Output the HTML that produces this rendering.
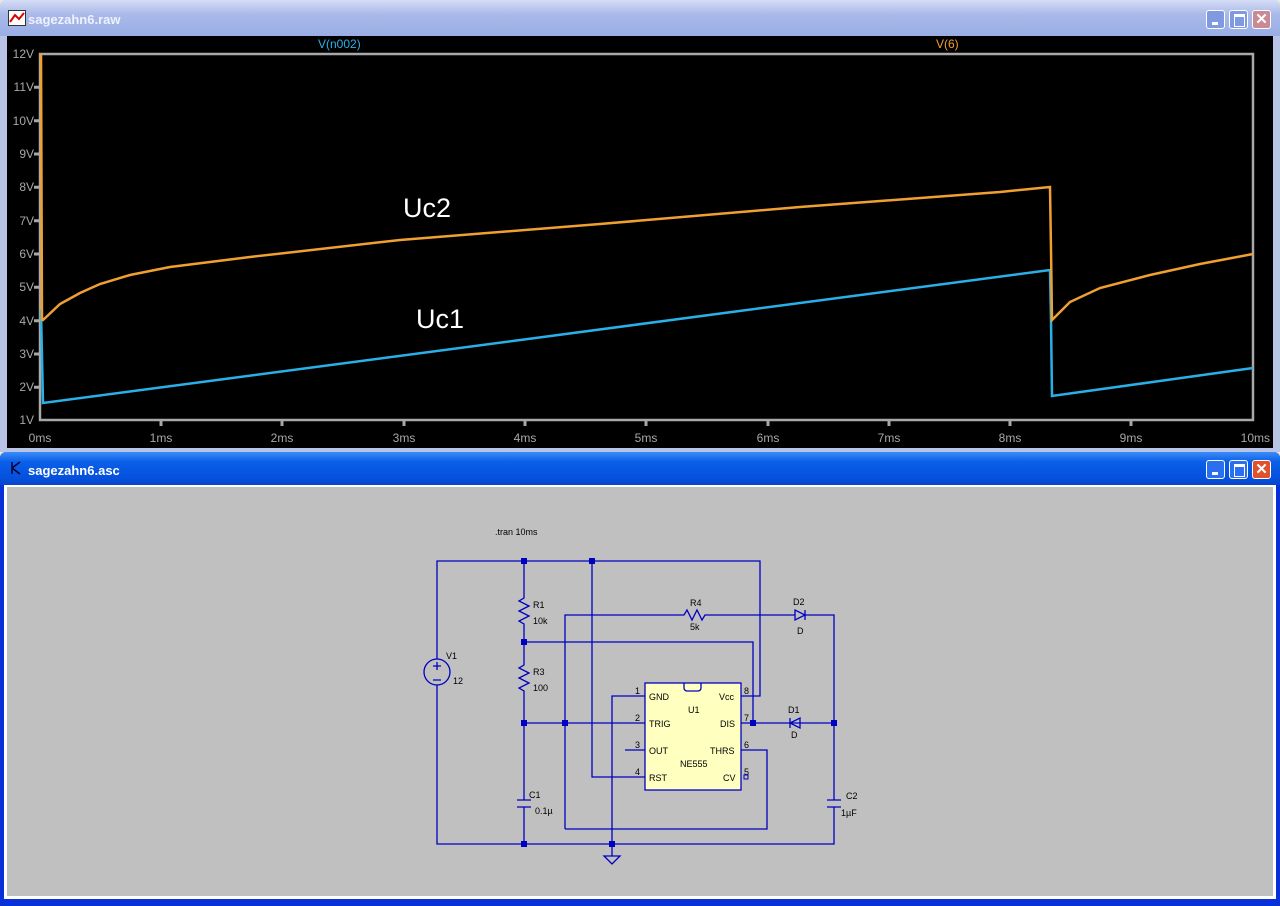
<!DOCTYPE html>
<html><head><meta charset="utf-8"><style>
body{margin:0;width:1280px;height:906px;background:#ece9d8;overflow:hidden;font-family:"Liberation Sans",sans-serif}
.w{position:absolute;left:0;width:1280px}
.tb{position:absolute;left:0;width:1280px;color:#fff;font:bold 13px "Liberation Sans",sans-serif}
.btn{position:absolute;width:19px;height:19px;border:1px solid #fff;border-radius:3px;box-sizing:border-box}
</style></head><body>
<div class="w" style="top:0;height:452px;background:#b7c4e6;border-radius:6px 6px 0 0"></div>
<div class="tb" style="top:0;height:36px;background:linear-gradient(#d4dcf5,#a9b9e8 40%,#9aaee5);border-radius:6px 6px 0 0">
 <svg style="position:absolute;left:8px;top:10px" width="18" height="16"><rect x="0.5" y="0.5" width="17" height="15" fill="#fff" stroke="#333"/><path d="M2 12 L7 5 L11 9 L16 3" stroke="#d00" stroke-width="2" fill="none"/></svg>
 <span style="position:absolute;left:28px;top:12px;color:#eef2ff">sagezahn6.raw</span>
 <div class="btn" style="left:1206px;top:10px;background:#7f9ae0"><div style="position:absolute;left:5px;top:11px;width:6px;height:3px;background:#fff"></div></div>
 <div class="btn" style="left:1229px;top:10px;background:#7f9ae0"><div style="position:absolute;left:4px;top:3px;width:9px;height:9px;border:1px solid #fff;border-top-width:3px"></div></div>
 <div class="btn" style="left:1252px;top:10px;background:#c98a93;color:#fff;font-size:15px;text-align:center;line-height:17px">✕</div>
</div>
<div style="position:absolute;left:7px;top:36px;width:1266px;height:412px;background:#000"></div>
<svg style="position:absolute;left:0;top:0" width="1280" height="452" font-family="Liberation Sans" font-size="12">
 <rect x="40" y="54" width="1213" height="366" fill="none" stroke="#a8a8a8" stroke-width="2.5"/>
 <g fill="#a8a8a8" text-anchor="end">
  <text x="34" y="58">12V</text><text x="34" y="91">11V</text><text x="34" y="125">10V</text><text x="34" y="158">9V</text><text x="34" y="191">8V</text><text x="34" y="225">7V</text><text x="34" y="258">6V</text><text x="34" y="291">5V</text><text x="34" y="325">4V</text><text x="34" y="358">3V</text><text x="34" y="391">2V</text><text x="34" y="424">1V</text>
 </g>
 <g stroke="#a8a8a8" stroke-width="3">
  <path d="M34 87.3h6M34 120.7h6M34 154h6M34 187.3h6M34 220.7h6M34 254h6M34 287.3h6M34 320.7h6M34 354h6M34 387.3h6"/>
  <path d="M161 420v6M282 420v6M404 420v6M525 420v6M646 420v6M768 420v6M889 420v6M1010 420v6M1131 420v6"/>
 </g>
 <g fill="#a8a8a8" text-anchor="middle">
  <text x="40" y="442">0ms</text><text x="161" y="442">1ms</text><text x="282" y="442">2ms</text><text x="404" y="442">3ms</text><text x="525" y="442">4ms</text><text x="646" y="442">5ms</text><text x="768" y="442">6ms</text><text x="889" y="442">7ms</text><text x="1010" y="442">8ms</text><text x="1131" y="442">9ms</text><text x="1270" y="442" text-anchor="end">10ms</text>
 </g>
 <text x="318" y="48" fill="#2ab0e8">V(n002)</text>
 <text x="936" y="48" fill="#f0a030">V(6)</text>
 <path d="M41 320 L41 310 L43 403 L1050 270 L1051 320 L1052 396 L1253 368" fill="none" stroke="#2ab0e8" stroke-width="2.5"/>
 <path d="M41 54 L42 320 L43 320 L60 304 L80 293 L100 284 L130 275 L170 267 L250 257 L400 240 L600 224 L800 207 L1000 192 L1050 187 L1051 250 L1052 320 L1070 302 L1100 288 L1150 275 L1200 264 L1253 254" fill="none" stroke="#f0a030" stroke-width="2.5"/>
 <text x="403" y="217" fill="#fff" font-size="27">Uc2</text>
 <text x="416" y="328" fill="#fff" font-size="27">Uc1</text>
</svg>
<div class="w" style="top:452px;height:454px;background:#0831d9;border-radius:6px 6px 0 0"></div>
<div class="tb" style="top:452px;height:33px;background:linear-gradient(#3c8cf8,#0a5fe8 30%,#0550dc 80%,#0846c8);border-radius:6px 6px 0 0">
 <svg style="position:absolute;left:9px;top:8px" width="14" height="16"><path d="M3 2v12M3 8l8-6M3 8l8 6" stroke="#003" stroke-width="1.5" fill="none"/></svg>
 <span style="position:absolute;left:28px;top:11px">sagezahn6.asc</span>
 <div class="btn" style="left:1206px;top:8px;background:#2a6ff0"><div style="position:absolute;left:5px;top:11px;width:6px;height:3px;background:#fff"></div></div>
 <div class="btn" style="left:1229px;top:8px;background:#2a6ff0"><div style="position:absolute;left:4px;top:3px;width:9px;height:9px;border:1px solid #fff;border-top-width:3px"></div></div>
 <div class="btn" style="left:1252px;top:8px;background:#e0502a;color:#fff;font-size:15px;text-align:center;line-height:17px">✕</div>
</div>
<div style="position:absolute;left:4px;top:485px;width:1272px;height:414px;background:#fff"></div>
<div style="position:absolute;left:7px;top:487px;width:1266px;height:409px;background:#c0c0c0"></div>
<svg style="position:absolute;left:0;top:0" width="1280" height="906" font-family="Liberation Sans" font-size="9">
 <text x="495" y="535" fill="#000">.tran 10ms</text>
 <g stroke="#0000c0" stroke-width="1.3" fill="none">
  <path d="M437 659V561H760V696H741"/>
  <path d="M437 685V844H834V807"/>
  <path d="M524 561V598l-5 3 10 5-10 5 10 5-10 5 5 3V665l-5 3 10 5-10 5 10 5-10 5 5 3V800M524 807V844"/>
  <path d="M517 800h14M517 807h14M827 800h14M827 807h14"/>
  <path d="M592 561V777H645"/>
  <path d="M565 829V615H684l3-5 5 10 5-10 5 10 3-5H795M805 615H834V800"/>
  <path d="M795 610v10l10-5z M805 610v10"/>
  <path d="M524 642H753V723"/>
  <path d="M612 856V696H645"/>
  <path d="M524 723H645M741 723H834"/>
  <path d="M800 718v10l-10-5z M790 718v10"/>
  <path d="M625 750H645M741 750H767V829H565"/>
  <path d="M604 856h16l-8 8z"/>
  <circle cx="437" cy="672" r="13"/>
  <path d="M433 666h8M437 662v8M433 680h8"/>
 </g>
 <rect x="645" y="683" width="96" height="107" fill="#ffffc0" stroke="#0000c0" stroke-width="1.3"/>
 <path d="M684 683v5a3 3 0 0 0 3 3h11a3 3 0 0 0 3-3v-5" fill="none" stroke="#0000c0" stroke-width="1.3"/>
 <rect x="744" y="775" width="4" height="4" fill="none" stroke="#0000c0"/>
 <g fill="#0000c0">
  <rect x="521" y="558" width="6" height="6"/><rect x="589" y="558" width="6" height="6"/><rect x="521" y="639" width="6" height="6"/><rect x="521" y="720" width="6" height="6"/><rect x="562" y="720" width="6" height="6"/><rect x="750" y="720" width="6" height="6"/><rect x="831" y="720" width="6" height="6"/><rect x="521" y="841" width="6" height="6"/><rect x="609" y="841" width="6" height="6"/>
 </g>
 <g fill="#000">
  <text x="446" y="659">V1</text><text x="453" y="684">12</text>
  <text x="533" y="608">R1</text><text x="533" y="624">10k</text>
  <text x="533" y="675">R3</text><text x="533" y="691">100</text>
  <text x="529" y="798">C1</text><text x="535" y="814">0.1µ</text>
  <text x="846" y="799">C2</text><text x="841" y="816">1µF</text>
  <text x="690" y="606">R4</text><text x="690" y="630">5k</text>
  <text x="793" y="605">D2</text><text x="797" y="634">D</text>
  <text x="788" y="713">D1</text><text x="791" y="738">D</text>
  <text x="649" y="700">GND</text><text x="649" y="727">TRIG</text><text x="649" y="754">OUT</text><text x="649" y="781">RST</text>
  <text x="719" y="700">Vcc</text><text x="720" y="727">DIS</text><text x="710" y="754">THRS</text><text x="723" y="781">CV</text>
  <text x="688" y="713">U1</text><text x="680" y="767">NE555</text>
  <text x="635" y="694">1</text><text x="635" y="721">2</text><text x="635" y="748">3</text><text x="635" y="775">4</text>
  <text x="744" y="694">8</text><text x="744" y="721">7</text><text x="744" y="748">6</text><text x="744" y="775">5</text>
 </g>
</svg>
</body></html>
